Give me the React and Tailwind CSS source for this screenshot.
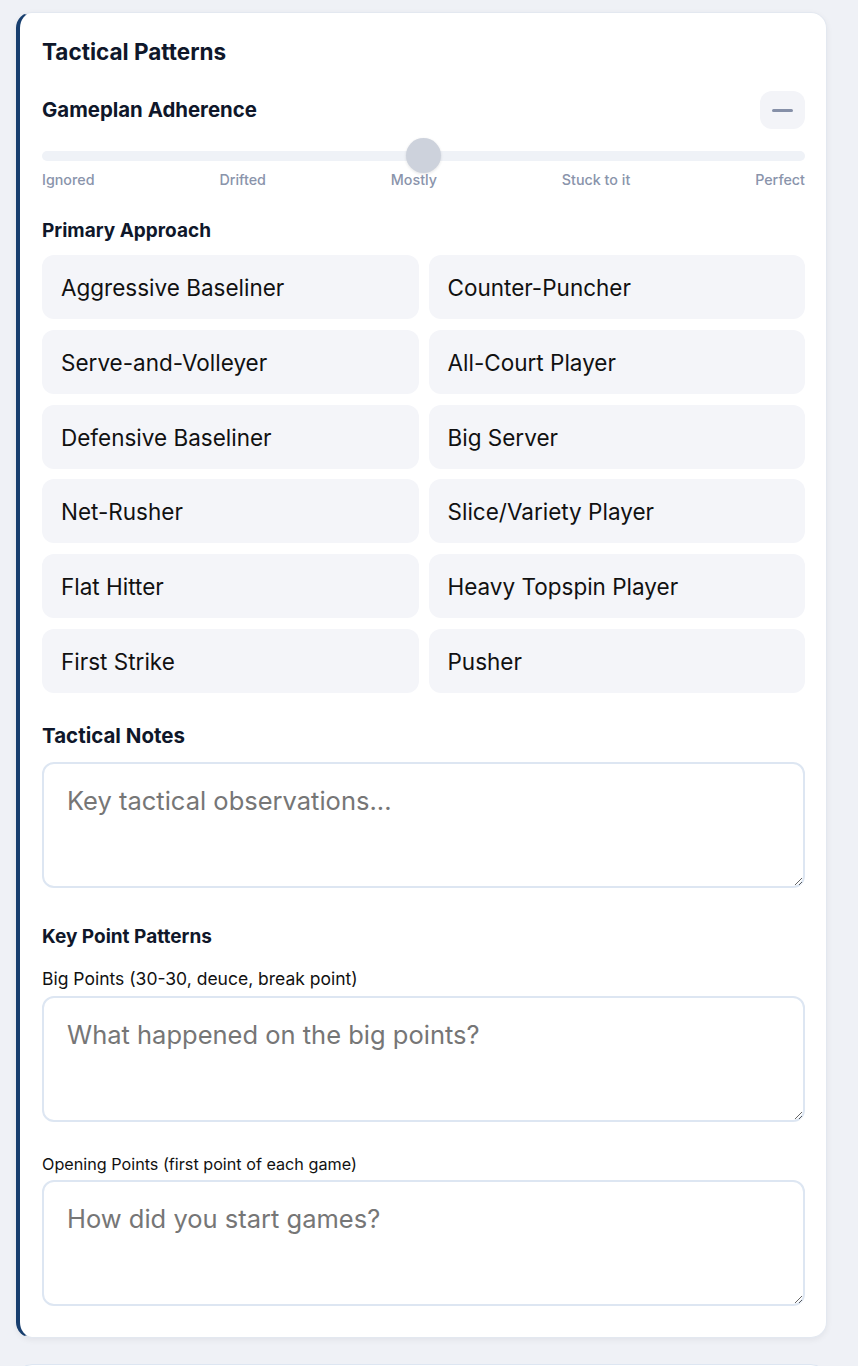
import { useState } from 'react';

const approaches = [
    'Aggressive Baseliner', 'Counter-Puncher',
    'Serve-and-Volleyer', 'All-Court Player',
    'Defensive Baseliner', 'Big Server',
    'Net-Rusher', 'Slice/Variety Player',
    'Flat Hitter', 'Heavy Topspin Player',
    'First Strike', 'Pusher',
];

const levels = ['Ignored', 'Drifted', 'Mostly', 'Stuck to it', 'Perfect'];

const NoteBox = ({ placeholder, className = '' }) => (
    <textarea
        placeholder={placeholder}
        className={`block w-full h-[126px] resize-y rounded-xl border-2 border-[#dde6f2] bg-white px-[23px] pt-[21px] text-[25.5px] leading-[32px] text-[#111] placeholder:text-[#767676] outline-none ${className}`}
    />
);

export default function App() {
    const [selected, setSelected] = useState(null);

    return (
        <div className="min-h-screen bg-[#eff1f6] pt-[12px] pl-[16px]" style={{ fontFamily: 'Inter, "Noto Sans", sans-serif' }}>
            <div className="w-[811px] rounded-2xl border border-[#e3e8f0] border-l-4 border-l-[#173e6e] bg-white pt-[25px] pl-[22px] pr-[21px] pb-[31px] shadow-[0_2px_6px_rgba(15,23,42,0.06)]">
                <h2 className="text-[22.5px] leading-[28px] font-bold text-[#0f172a]">Tactical Patterns</h2>

                <div className="mt-[25px] flex items-center justify-between h-[38px]">
                    <h3 className="text-[20.4px] leading-[24px] font-bold text-[#0f172a]">Gameplan Adherence</h3>
                    <button className="w-[45px] h-[38px] rounded-xl bg-[#f3f4f8] flex items-center justify-center">
                        <span className="block w-[21px] h-[3px] rounded-full bg-[#8690a8]" />
                    </button>
                </div>

                <div className="relative mt-[22px] h-[10px] rounded-full bg-[#eff2f7]">
                    <div className="absolute left-[364px] top-[-13px] w-[35px] h-[35px] rounded-full bg-[#cdd2dc] shadow-[0_1px_3px_rgba(15,23,42,0.12)]" />
                </div>
                <div className="mt-[11px] flex justify-between text-[14.3px] leading-[16px] font-medium text-[#8a94ab]">
                    {levels.map(l => <span key={l}>{l}</span>)}
                </div>

                <h3 className="mt-[31px] text-[19px] leading-[24px] font-bold text-[#0f172a]">Primary Approach</h3>
                <div className="mt-[12px] grid grid-cols-2 gap-x-[10px] gap-y-[10.8px]">
                    {approaches.map(a => (
                        <button
                            key={a}
                            onClick={() => setSelected(a)}
                            className={`h-[64px] rounded-xl px-[19px] pt-[2px] text-left text-[22.5px] leading-[28px] text-[#111] ${selected === a ? 'bg-[#dfe6f2]' : 'bg-[#f4f5f9]'}`}
                        >
                            {a}
                        </button>
                    ))}
                </div>

                <h3 className="mt-[31px] text-[20.5px] leading-[24px] font-bold text-[#0f172a]">Tactical Notes</h3>
                <NoteBox className="mt-[14px]" placeholder="Key tactical observations..." />

                <h3 className="mt-[37px] text-[19px] leading-[24px] font-bold text-[#0f172a]">Key Point Patterns</h3>
                <label className="block mt-[20px] text-[17.5px] leading-[20px] text-[#111]">Big Points (30-30, deuce, break point)</label>
                <NoteBox className="mt-[7px]" placeholder="What happened on the big points?" />

                <label className="block mt-[32px] text-[16.2px] leading-[20px] text-[#111]">Opening Points (first point of each game)</label>
                <NoteBox className="mt-[6px]" placeholder="How did you start games?" />
            </div>

            <div className="mt-[26px] w-[811px] h-[40px] rounded-t-2xl border border-[#dde6f2] bg-white" />
        </div>
    );
}
